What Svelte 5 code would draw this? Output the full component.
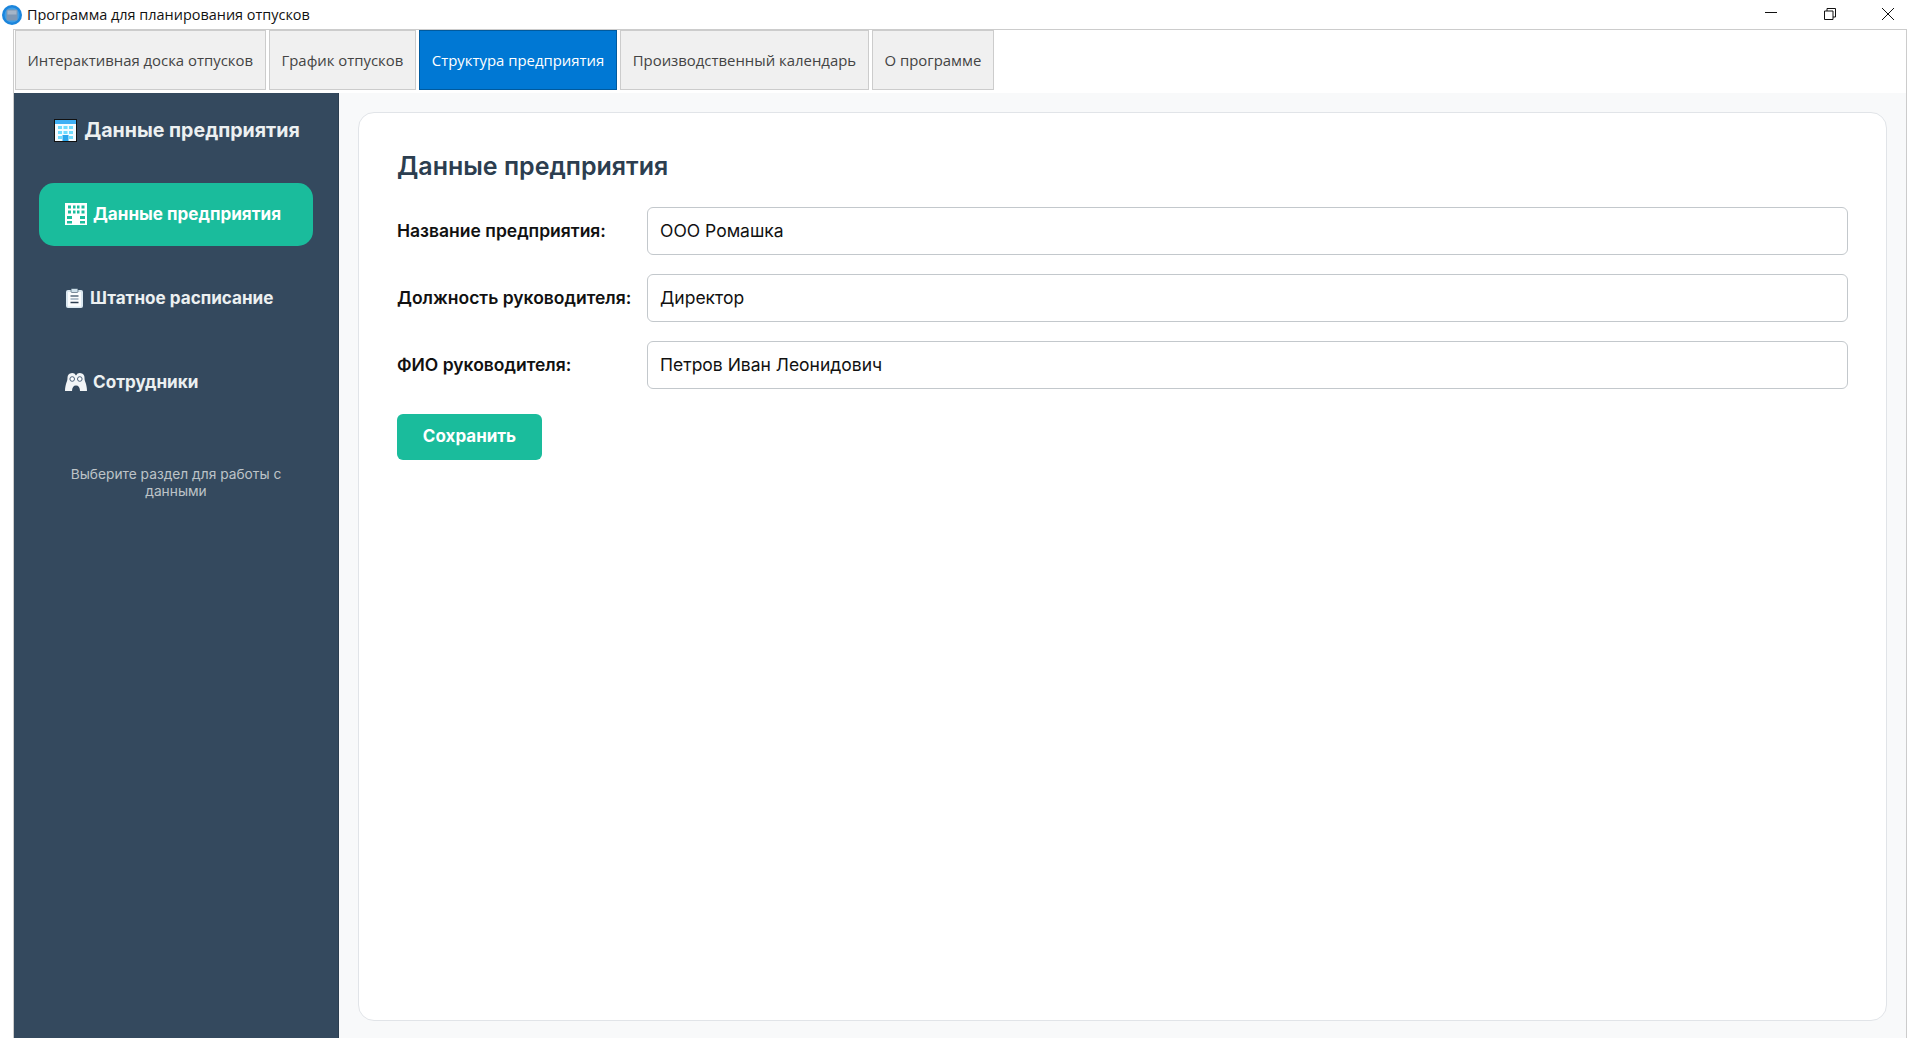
<script>
  const tabs = [
    { label: 'Интерактивная доска отпусков' },
    { label: 'График отпусков' },
    { label: 'Структура предприятия', active: true },
    { label: 'Производственный календарь' },
    { label: 'О программе' }
  ];
  const fields = [
    { label: 'Название предприятия:', value: 'ООО Ромашка' },
    { label: 'Должность руководителя:', value: 'Директор' },
    { label: 'ФИО руководителя:', value: 'Петров Иван Леонидович' }
  ];
</script>

<div class="window">
  <header class="titlebar">
    <svg class="appicon" viewBox="0 0 20 20" aria-hidden="true">
      <circle cx="10" cy="10" r="10" fill="#1b85dc" />
      <circle cx="10" cy="10" r="7.5" fill="#3f9ee6" />
      <rect x="4.500" y="4.500" width="11" height="11" rx="1.500" fill="#7f97b3" />
      <rect x="5.500" y="5.500" width="9" height="4" fill="#a5b5c8" />
    </svg>
    <span class="apptitle">Программа для планирования отпусков</span>
    <div class="controls">
      <svg viewBox="0 0 12 12" aria-hidden="true"><path d="M0 4.500h12" stroke="#111" fill="none" /></svg>
      <svg viewBox="0 0 12 12" aria-hidden="true"><path d="M.5 3h8.500v8.500h-8.500zM3 3V.500h8.500V9H9" stroke="#111" fill="none" /></svg>
      <svg viewBox="0 0 12 12" aria-hidden="true"><path d="M0 0l12 12M12 0L0 12" stroke="#111" fill="none" /></svg>
    </div>
  </header>

  <div class="frame">
    <nav class="tabs">
      {#each tabs as tab}
        <button class="tab" class:active={tab.active}>{tab.label}</button>
      {/each}
    </nav>

    <div class="body">
      <aside class="sidebar">
        <h2 class="side-title">
          <svg class="ico big" viewBox="0 0 23 23" aria-hidden="true">
            <rect x="0.500" y="0.500" width="22" height="22" fill="#f4fbff" stroke="#111" />
            <rect x="1" y="1" width="21" height="4" fill="#3fb0f5" />
            <g fill="#6fdcff">
              <rect x="4" y="7" width="4" height="3" /><rect x="9.500" y="7" width="4" height="3" /><rect x="15" y="7" width="4" height="3" />
              <rect x="4" y="12" width="4" height="3" /><rect x="9.500" y="12" width="4" height="3" /><rect x="15" y="12" width="4" height="3" />
              <rect x="4" y="17" width="4" height="3" /><rect x="15" y="17" width="4" height="3" />
            </g>
            <rect x="8.500" y="16" width="6" height="6" fill="#2aa7ec" />
          </svg>
          Данные предприятия
        </h2>

        <button class="item selected">
          <svg class="ico" viewBox="0 0 22 22" aria-hidden="true">
            <rect width="22" height="22" fill="#fff" />
            <g fill="#1abc9c">
              <rect x="3" y="2.500" width="3" height="3" /><rect x="8" y="2.500" width="2.500" height="3" /><rect x="12" y="2.500" width="2.500" height="3" /><rect x="16.500" y="2.500" width="3" height="3" />
              <rect x="3" y="7.500" width="3" height="3" /><rect x="8" y="7.500" width="2.500" height="3" /><rect x="12" y="7.500" width="2.500" height="3" /><rect x="16.500" y="7.500" width="3" height="3" />
              <rect x="2" y="13" width="5" height="3" /><rect x="15" y="13" width="5" height="3" />
              <rect x="2" y="18" width="5" height="2.500" /><rect x="15" y="18" width="5" height="2.500" />
            </g>
          </svg>
          Данные предприятия
        </button>

        <button class="item">
          <svg class="ico clip" viewBox="0 0 18 20" aria-hidden="true">
            <rect x="0.500" y="2" width="17" height="18" rx="2" fill="#dbe8f0" />
            <rect x="2.500" y="4" width="13" height="14.500" fill="#fbfdfe" />
            <rect x="5.500" y="0.500" width="7" height="4" rx="1" fill="#cfe0ea" stroke="#34495e" stroke-width=".6" />
            <path d="M5 8h8" stroke="#3d5266" stroke-width="1.300" fill="none" />
            <path d="M5 11h8" stroke="#8fa3b3" stroke-width="1.300" fill="none" />
            <path d="M5 14.500h8" stroke="#2c3e50" stroke-width="1.500" fill="none" />
          </svg>
          Штатное расписание
        </button>

        <button class="item">
          <svg class="ico people" viewBox="0 0 22 18" aria-hidden="true">
            <path d="M2.500 4.500a4.500 4.500 0 0 1 8.500-2 4.500 4.500 0 0 1 8.500 2c0 2.500.5 3.500 1.200 5.500.7 2.200 1.300 5 1.300 8H0c0-3 .6-5.800 1.300-8C2 8 2.500 7 2.500 4.500z" fill="#f2f5f7" />
            <path d="M7 18c0-3.500 1.500-5.500 4-5.500s4 2 4 5.500z" fill="#34495e" />
            <circle cx="7.200" cy="6" r="2.300" fill="#fff" stroke="#4a6078" stroke-width="1" />
            <circle cx="14.800" cy="6" r="2.300" fill="#fff" stroke="#4a6078" stroke-width="1" />
          </svg>
          Сотрудники
        </button>

        <p class="hint">Выберите раздел для работы с данными</p>
      </aside>

      <main class="main">
        <section class="card">
          <h1>Данные предприятия</h1>
          <div class="form">
            {#each fields as f}
              <label class="row">
                <span class="lbl">{f.label}</span>
                <input class="inp" type="text" value={f.value} />
              </label>
            {/each}
          </div>
          <button class="save">Сохранить</button>
        </section>
      </main>
    </div>
  </div>
</div>

<style>
  :global(body) {
    margin: 0;
    background: #fff;
    overflow: hidden;
  }
  .window {
    height: 1038px;
    display: flex;
    flex-direction: column;
    background: #fff;
    font-family: Inter, sans-serif;
  }
  .titlebar {
    height: 29px;
    flex: none;
    display: flex;
    align-items: center;
    padding-left: 2px;
    font-family: "Open Sans", sans-serif;
    color: #111;
  }
  .appicon {
    width: 20px;
    height: 20px;
    margin-right: 5px;
  }
  .apptitle {
    font-size: 14.450px;
  }
  .controls {
    margin-left: auto;
    margin-bottom: 1px;
    display: flex;
    gap: 46.500px;
    padding-right: 26px;
  }
  .controls svg {
    width: 12px;
    height: 12px;
  }
  .frame {
    flex: 1;
    min-height: 0;
    margin: 0 13px 0 13px;
    border: solid #ccc;
    border-width: 1px 1px 0 1px;
    display: flex;
    flex-direction: column;
  }
  .tabs {
    height: 63px;
    flex: none;
    display: flex;
    gap: 3.500px;
    padding-left: 1px;
    box-sizing: border-box;
  }
  .tab {
    height: 60px;
    padding: 0 11.500px;
    background: #f0f0f0;
    border: 1px solid #ccc;
    color: #444;
    font-family: "Open Sans", sans-serif;
    font-size: 14.900px;
    white-space: nowrap;
  }
  .tab.active {
    background: #0078d4;
    border-color: #005a9e;
    color: #fff;
  }
  .body {
    flex: 1;
    min-height: 0;
    display: flex;
  }
  .sidebar {
    width: 325px;
    flex: none;
    box-sizing: border-box;
    background: #34495e;
    padding: 20px 25px 0;
    color: #ecf0f1;
    display: flex;
    flex-direction: column;
    border-right: 1px solid #2c3e50;
  }
  .side-title {
    margin: 0 0 36px;
    height: 34px;
    padding-left: 2px;
    display: flex;
    align-items: center;
    justify-content: center;
    gap: 7px;
    font-size: 19.600px;
    font-weight: 700;
    color: #ecf0f1;
    white-space: nowrap;
  }
  .ico {
    width: 22px;
    height: 22px;
    flex: none;
  }
  .ico.big {
    width: 23px;
    height: 23px;
  }
  .ico.clip {
    width: 19px;
    height: 20px;
  }
  .ico.people {
    width: 22px;
    height: 18px;
  }
  .item {
    height: 63px;
    flex: none;
    margin-bottom: 21px;
    border: 0;
    border-radius: 15px;
    background: transparent;
    color: #ecf0f1;
    font-family: Inter, sans-serif;
    font-size: 17.100px;
    font-weight: 700;
    display: flex;
    align-items: center;
    gap: 6px;
    padding: 0 26px 2px;
    white-space: nowrap;
  }
  .item.selected {
    background: #1abc9c;
    color: #fff;
  }
  .hint {
    margin: 31px 0 0;
    text-align: center;
    font-size: 13.750px;
    line-height: 17px;
    color: #bdc3c7;
  }
  .main {
    flex: 1;
    min-width: 0;
    background: #f8f9fa;
    padding: 19px 19px 17px;
    display: flex;
  }
  .card {
    flex: 1;
    box-sizing: border-box;
    background: #fff;
    border: 1px solid #e1e4e8;
    border-radius: 16px;
    padding: 37px 38px 0;
  }
  h1 {
    margin: 0 0 25px;
    font-size: 25px;
    font-weight: 600;
    line-height: 32px;
    color: #2c3e50;
  }
  .form {
    display: flex;
    flex-direction: column;
    gap: 19px;
  }
  .row {
    display: flex;
    align-items: center;
  }
  .lbl {
    width: 250px;
    flex: none;
    padding-bottom: 2px;
    font-size: 17.500px;
    font-weight: 600;
    color: #111;
  }
  .inp {
    flex: 1;
    min-width: 0;
    height: 48px;
    box-sizing: border-box;
    border: 1px solid #c3c8cc;
    border-radius: 6px;
    padding: 0 12px 2px;
    font-family: Inter, sans-serif;
    font-size: 17.500px;
    color: #111;
    background: #fff;
  }
  .save {
    margin-top: 25px;
    width: 145px;
    height: 46px;
    border: 0;
    border-radius: 6px;
    padding: 0 0 2px;
    background: #1abc9c;
    color: #fff;
    font-family: Inter, sans-serif;
    font-size: 17px;
    font-weight: 700;
  }
</style>
